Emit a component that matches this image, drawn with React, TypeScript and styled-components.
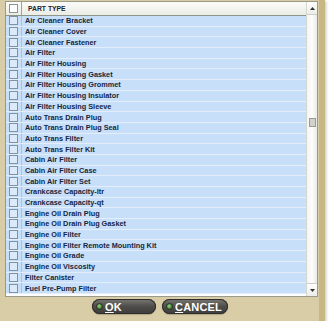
import React from "react";
import styled, { createGlobalStyle } from "styled-components";

const Global = createGlobalStyle`
  html, body { margin: 0; padding: 0; background: #ffffff; }
  body { font-family: "Liberation Sans", Arial, sans-serif; }
`;

const items = [
  "Air Cleaner Bracket",
  "Air Cleaner Cover",
  "Air Cleaner Fastener",
  "Air Filter",
  "Air Filter Housing",
  "Air Filter Housing Gasket",
  "Air Filter Housing Grommet",
  "Air Filter Housing Insulator",
  "Air Filter Housing Sleeve",
  "Auto Trans Drain Plug",
  "Auto Trans Drain Plug Seal",
  "Auto Trans Filter",
  "Auto Trans Filter Kit",
  "Cabin Air Filter",
  "Cabin Air Filter Case",
  "Cabin Air Filter Set",
  "Crankcase Capacity-ltr",
  "Crankcase Capacity-qt",
  "Engine Oil Drain Plug",
  "Engine Oil Drain Plug Gasket",
  "Engine Oil Filter",
  "Engine Oil Filter Remote Mounting Kit",
  "Engine Oil Grade",
  "Engine Oil Viscosity",
  "Filter Canister",
  "Fuel Pre-Pump Filter",
];

const Shadow = styled.div`
  width: 325px;
  height: 321px;
  box-shadow: 1px 1px 3px rgba(0, 0, 0, 0.25);
`;

const Dialog = styled.div`
  width: 325px;
  height: 321px;
  background: #d8cda6;
  border-right: 6px solid #c7b781;
  display: flex;
  flex-direction: column;
  align-items: flex-start;
  padding: 1px 0 0 5px;
  box-sizing: border-box;
`;

const Panel = styled.div`
  width: 313px;
  height: 296px;
  display: flex;
  border: 1px solid #9a9a8c;
  box-sizing: border-box;
  background: #ffffff;
`;

const ListArea = styled.div`
  flex: 1;
  display: flex;
  flex-direction: column;
  overflow: hidden;
`;

const HeaderRow = styled.div`
  height: 13px;
  display: flex;
  align-items: stretch;
  background: linear-gradient(#fbfbf8, #ecece6);
  border-bottom: 1px solid #8e9689;
  flex-shrink: 0;
`;

const CheckCell = styled.div`
  width: 15px;
  display: flex;
  align-items: center;
  justify-content: center;
  border-right: 1px solid #b8bfc8;
  flex-shrink: 0;
`;

const HeaderCheckCell = styled(CheckCell)`
  border-right: 1px solid #a0a39a;
`;

const Box = styled.div<{ $header?: boolean }>`
  width: 7px;
  height: 7px;
  border: 1px solid ${(p) => (p.$header ? "#8f9391" : "#7f93a6")};
  background: ${(p) => (p.$header ? "#ffffff" : "#dbe9f8")};
`;

const HeaderLabel = styled.div`
  font-size: 6.8px;
  font-weight: bold;
  color: #1d2430;
  display: flex;
  align-items: center;
  padding-left: 6px;
`;

const Row = styled.div`
  height: 10.7px;
  display: flex;
  align-items: stretch;
  background: #c7dff9;
  border-bottom: 1px solid #e4eefa;
  box-sizing: border-box;
  flex-shrink: 0;
`;

const RowLabel = styled.div`
  font-size: 7.3px;
  font-weight: bold;
  color: #152641;
  display: flex;
  align-items: center;
  padding-left: 3px;
  white-space: nowrap;
`;

const Scrollbar = styled.div`
  width: 10px;
  display: flex;
  flex-direction: column;
  background: linear-gradient(90deg, #f4f4f2, #fdfdfc 50%, #e9e9e6);
  border-left: 1px solid #d6d6d0;
  flex-shrink: 0;
`;

const ArrowBtn = styled.div`
  height: 12px;
  display: flex;
  align-items: center;
  justify-content: center;
  background: linear-gradient(#fefefe, #ecece8);
  border-bottom: 1px solid #cfcfca;
`;

const ArrowBtnBottom = styled(ArrowBtn)`
  border-bottom: none;
  border-top: 1px solid #cfcfca;
`;

const Track = styled.div`
  flex: 1;
  display: flex;
  flex-direction: column;
  align-items: center;
  padding-top: 103px;
`;

const Thumb = styled.div`
  width: 5px;
  height: 7px;
  background: #d0d0cc;
  border: 1px solid #9a9a96;
`;

const ButtonBar = styled.div`
  width: 313px;
  display: flex;
  justify-content: center;
  gap: 6px;
  padding-top: 2px;
  padding-right: 3px;
  box-sizing: border-box;
`;

const Pill = styled.div<{ $w: number }>`
  width: ${(p) => p.$w}px;
  height: 15px;
  border-radius: 8px;
  background: linear-gradient(#7a7874, #4f4d4a 50%, #3f3d3b);
  box-shadow: inset 0 0 0 1px #2e2d2b, 0 1px 1px rgba(0, 0, 0, 0.2);
  display: flex;
  align-items: center;
  padding-left: 4px;
  box-sizing: border-box;
  gap: 2px;
`;

const Dot = styled.div`
  width: 7px;
  height: 7px;
  border-radius: 50%;
  background: radial-gradient(circle at 40% 40%, #9fd48c, #3d7b2c 70%);
  border: 1px solid #233b1b;
  box-sizing: border-box;
`;

const BtnText = styled.span`
  font-size: 11px;
  font-weight: bold;
  color: #ffffff;
  letter-spacing: 0.2px;
  u { text-decoration: underline; }
`;

const Arrow = ({ up }: { up?: boolean }) => (
  <svg width="5" height="3" viewBox="0 0 5 3">
    <path d={up ? "M0 3 L2.5 0 L5 3 Z" : "M0 0 L2.5 3 L5 0 Z"} fill="#333" />
  </svg>
);

export default function App() {
  return (
    <>
      <Global />
      <Shadow>
        <Dialog>
          <Panel>
            <ListArea>
              <HeaderRow>
                <HeaderCheckCell>
                  <Box $header />
                </HeaderCheckCell>
                <HeaderLabel>PART TYPE</HeaderLabel>
              </HeaderRow>
              {items.map((t) => (
                <Row key={t}>
                  <CheckCell>
                    <Box />
                  </CheckCell>
                  <RowLabel>{t}</RowLabel>
                </Row>
              ))}
            </ListArea>
            <Scrollbar>
              <ArrowBtn>
                <Arrow up />
              </ArrowBtn>
              <Track>
                <Thumb />
              </Track>
              <ArrowBtnBottom>
                <Arrow />
              </ArrowBtnBottom>
            </Scrollbar>
          </Panel>
          <ButtonBar>
            <Pill $w={64}>
              <Dot />
              <BtnText>
                <u>O</u>K
              </BtnText>
            </Pill>
            <Pill $w={66}>
              <Dot />
              <BtnText>
                <u>C</u>ANCEL
              </BtnText>
            </Pill>
          </ButtonBar>
        </Dialog>
      </Shadow>
    </>
  );
}
